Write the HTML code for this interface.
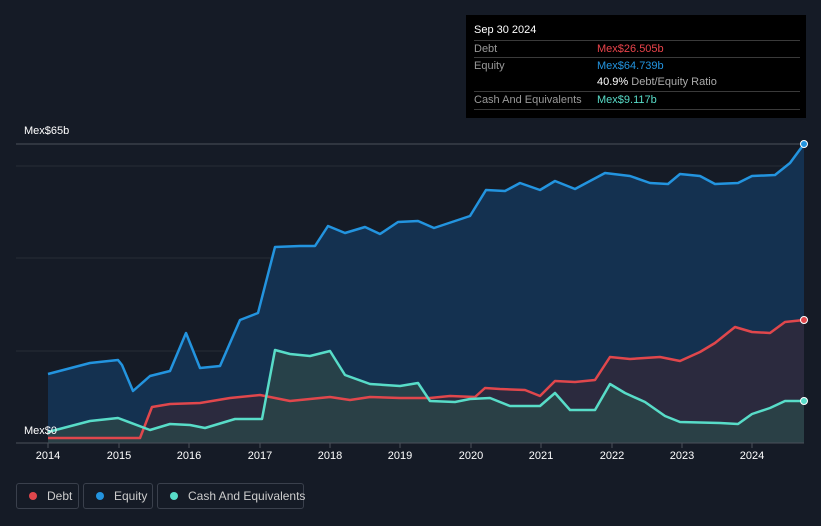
<!DOCTYPE html>
<html><head><meta charset="utf-8"><style>
html,body{margin:0;width:821px;height:526px;overflow:hidden}
body{background:#151b26;font-family:"Liberation Sans",sans-serif;position:relative}
.tt{position:absolute;left:466px;top:15px;width:340px;height:103px;background:#000;color:#fff;font-size:11px}
.tt .r{position:absolute;left:8px;width:326px;border-top:1px solid #3a3a3a;height:17px;line-height:17px}
.lab{color:#999;position:absolute;left:0}
.val{position:absolute;left:123px}
.leg{position:absolute;top:483px;height:26px;border:1px solid #3a404c;border-radius:3px;color:#ccc;font-size:12px;line-height:24px;box-sizing:border-box;white-space:nowrap}
.dot{display:inline-block;width:8px;height:8px;border-radius:50%;vertical-align:0}
.ax{position:absolute;top:450px;color:#fff;font-size:11px;width:40px;text-align:center}
</style></head><body>
<svg width="821" height="526" style="position:absolute;left:0;top:0">
<line x1="16" y1="144" x2="804" y2="144" stroke="#4a505a"/>
<line x1="16" y1="166" x2="804" y2="166" stroke="#262c37"/>
<line x1="16" y1="258" x2="804" y2="258" stroke="#262c37"/>
<line x1="16" y1="351" x2="804" y2="351" stroke="#262c37"/>
<path d="M48,374 L90,363 118,360 122,365 133,391 150,376 170,371 186,333 200,368 220,366 240,320 258,313 275,247 300,246 315,246 328,226 345,233 365,227 380,234 398,222 418,221 434,228 470,216 486,190 505,191 520,183 540,190 555,181 575,189 605,173 630,176 650,183 668,184 680,174 700,176 715,184 738,183 752,176 775,175 790,163 804,144 L804,443 L48,443Z" fill="#143150"/>
<path d="M48,438 L140,438 152,407 170,404 200,403 230,398 260,395 290,401 330,397 350,400 370,397 400,398 430,398 450,396 475,397 485,388 500,389 525,390 540,396 555,381 575,382 595,380 610,357 630,359 660,357 680,361 700,352 715,343 735,327 752,332 770,333 785,322 804,320 L804,443 L48,443Z" fill="#2e2a3c" opacity=".9"/>
<path d="M48,432 L90,421 118,418 150,430 170,424 190,425 205,428 235,419 262,419 275,350 290,354 310,356 330,351 345,375 370,384 400,386 418,383 430,401 455,402 470,399 490,398 510,406 540,406 555,393 570,410 595,410 610,384 625,393 645,402 665,416 680,422 720,423 738,424 752,414 770,408 785,401 804,401 L804,443 L48,443Z" fill="#2a4448" opacity=".85"/>
<line x1="16" y1="443" x2="804" y2="443" stroke="#4a505a"/>
<g fill="none" stroke-width="2.5" stroke-linejoin="round">
<path stroke="#2394df" d="M48,374 L90,363 118,360 122,365 133,391 150,376 170,371 186,333 200,368 220,366 240,320 258,313 275,247 300,246 315,246 328,226 345,233 365,227 380,234 398,222 418,221 434,228 470,216 486,190 505,191 520,183 540,190 555,181 575,189 605,173 630,176 650,183 668,184 680,174 700,176 715,184 738,183 752,176 775,175 790,163 804,144"/>
<path stroke="#e0474c" d="M48,438 L140,438 152,407 170,404 200,403 230,398 260,395 290,401 330,397 350,400 370,397 400,398 430,398 450,396 475,397 485,388 500,389 525,390 540,396 555,381 575,382 595,380 610,357 630,359 660,357 680,361 700,352 715,343 735,327 752,332 770,333 785,322 804,320"/>
<path stroke="#58dcc8" d="M48,432 L90,421 118,418 150,430 170,424 190,425 205,428 235,419 262,419 275,350 290,354 310,356 330,351 345,375 370,384 400,386 418,383 430,401 455,402 470,399 490,398 510,406 540,406 555,393 570,410 595,410 610,384 625,393 645,402 665,416 680,422 720,423 738,424 752,414 770,408 785,401 804,401"/>
</g>
<circle cx="804" cy="144" r="3.5" fill="#2394df" stroke="#fff" stroke-width="1"/>
<circle cx="804" cy="320" r="3.5" fill="#e0474c" stroke="#fff" stroke-width="1"/>
<circle cx="804" cy="401" r="3.5" fill="#58dcc8" stroke="#fff" stroke-width="1"/>
<g stroke="#4a505a"><line x1="48" y1="443" x2="48" y2="448"/><line x1="119" y1="443" x2="119" y2="448"/><line x1="189" y1="443" x2="189" y2="448"/><line x1="260" y1="443" x2="260" y2="448"/><line x1="330" y1="443" x2="330" y2="448"/><line x1="400" y1="443" x2="400" y2="448"/><line x1="471" y1="443" x2="471" y2="448"/><line x1="541" y1="443" x2="541" y2="448"/><line x1="612" y1="443" x2="612" y2="448"/><line x1="682" y1="443" x2="682" y2="448"/><line x1="752" y1="443" x2="752" y2="448"/></g>
</svg>
<div style="position:absolute;left:24px;top:125px;color:#fff;font-size:11px">Mex$65b</div>
<div style="position:absolute;left:24px;top:425px;color:#fff;font-size:11px">Mex$0</div>
<div class="ax" style="left:28px">2014</div><div class="ax" style="left:99px">2015</div><div class="ax" style="left:169px">2016</div><div class="ax" style="left:240px">2017</div><div class="ax" style="left:310px">2018</div><div class="ax" style="left:380px">2019</div><div class="ax" style="left:451px">2020</div><div class="ax" style="left:521px">2021</div><div class="ax" style="left:592px">2022</div><div class="ax" style="left:662px">2023</div><div class="ax" style="left:732px">2024</div>
<div class="tt">
<div style="position:absolute;left:8px;top:9px;font-size:11px">Sep 30 2024</div>
<div class="r" style="top:25px"><span class="lab">Debt</span><span class="val" style="color:#e9434a">Mex$26.505b</span></div>
<div class="r" style="top:42px"><span class="lab">Equity</span><span class="val" style="color:#2394df">Mex$64.739b</span></div>
<div class="r" style="top:59px;border-top:none"><span class="val" style="white-space:nowrap"><span style="color:#fff">40.9%</span> <span style="color:#aaa">Debt/Equity Ratio</span></span></div>
<div class="r" style="top:76px"><span class="lab">Cash And Equivalents</span><span class="val" style="color:#58dcc8">Mex$9.117b</span></div>
<div class="r" style="top:94px;height:0"></div>
</div>
<div class="leg" style="left:16px;width:63px"><span class="dot" style="background:#e0474c;margin:0 10px 0 12px"></span>Debt</div>
<div class="leg" style="left:83px;width:70px"><span class="dot" style="background:#2394df;margin:0 10px 0 12px"></span>Equity</div>
<div class="leg" style="left:157px;width:147px"><span class="dot" style="background:#58dcc8;margin:0 10px 0 12px"></span>Cash And Equivalents</div>
</body></html>
